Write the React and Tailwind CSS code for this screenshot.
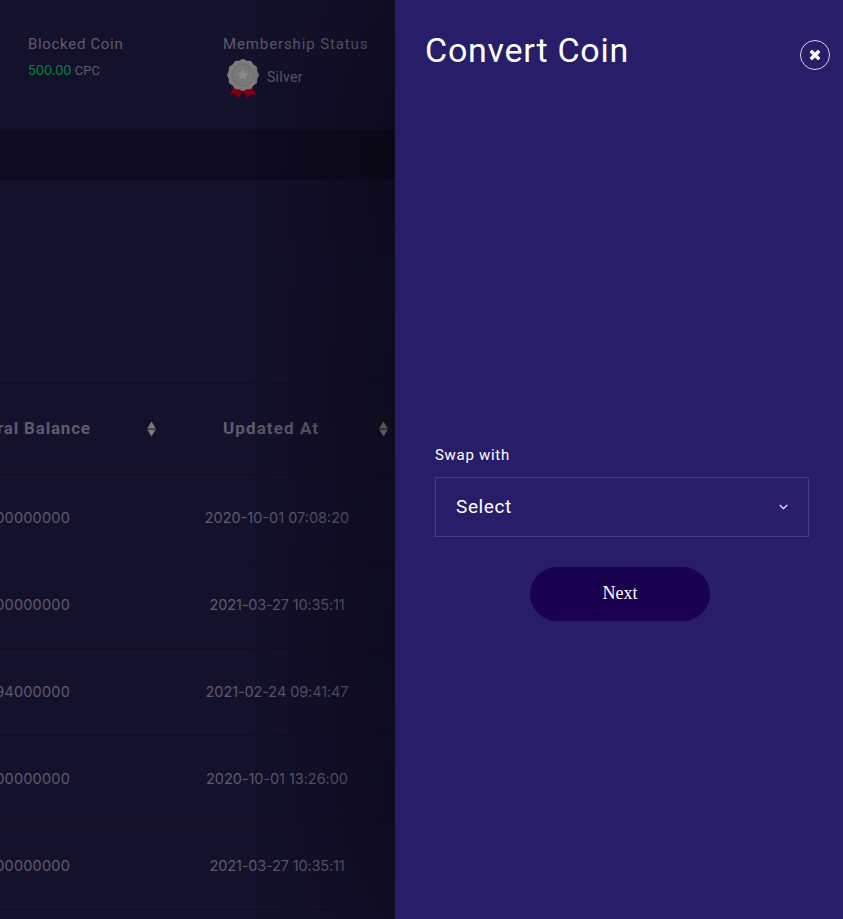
import React from "react";

const rows = [
  { balance: "0.00000000", date: "2020-10-01 07:08:20", cls: "tracking-[0px]" },
  { balance: "0.00000000", date: "2021-03-27 10:35:11", cls: "tracking-[-0.15px]" },
  { balance: "0.94000000", date: "2021-02-24 09:41:47", cls: "tracking-[-0.1px]" },
  { balance: "0.00000000", date: "2020-10-01 13:26:00", cls: "tracking-[-0.05px]" },
  { balance: "0.00000000", date: "2021-03-27 10:35:11", cls: "tracking-[-0.15px]" },
];

function SortIcon() {
  return (
    <svg width="9" height="16" viewBox="0 0 9 16" className="shrink-0" fill="#7c7a77">
      <path d="M4.5 0.5 L8.8 7.5 H0.2 Z" />
      <path d="M4.5 15.5 L8.8 8.5 H0.2 Z" />
    </svg>
  );
}

function Medal() {
  const points = Array.from({ length: 72 }, (_, i) => {
    const a = (i / 72) * Math.PI * 2;
    const r = 15.4 + 0.6 * Math.cos(a * 12);
    return `${16 + r * Math.sin(a)},${16 - r * Math.cos(a)}`;
  }).join(" ");
  return (
    <svg width="32" height="40" viewBox="0 0 32 40" className="shrink-0">
      <path d="M7 27 L3 35.8 L9 35.5 L11.5 40 L16 31 Z" fill="#80000f" />
      <path d="M25 27 L29 35.8 L23 35.5 L20.500 40 L16 31 Z" fill="#80000f" />
      <polygon points={points} fill="#7c7c7c" />
      <circle cx="16" cy="16" r="11" fill="#787878" stroke="#6e6e6e" strokeWidth="1" />
      <path d="M16 9.800 L17.700 13.700 L21.800 14.100 L18.700 16.900 L19.600 21 L16 18.900 L12.400 21 L13.300 16.900 L10.200 14.100 L14.300 13.700 Z" fill="#8a8a8a" />
    </svg>
  );
}

export default function App() {
  return (
    <div className="flex h-[919px] w-[843px] overflow-hidden bg-[#14112c] font-['Inter','Roboto',sans-serif]">
      <main className="flex w-[395px] shrink-0 flex-col text-[#5e5b6e]">
        <header className="flex h-[130px] shrink-0 pt-[34px] pl-[28px] font-['Roboto',sans-serif]">
          <div className="w-[195px] shrink-0">
            <div className="text-[15px] leading-5 tracking-[0.68px]">Blocked Coin</div>
            <div className="mt-1.5 text-[13px] leading-5 whitespace-nowrap">
              <span className="font-['Inter',sans-serif] text-[13px] tracking-[-0.05px] text-[#008a3e]">500.00</span> CPC
            </div>
          </div>
          <div>
            <div className="text-[15px] leading-5 tracking-[0.88px] whitespace-nowrap">Membership Status</div>
            <div className="mt-[5px] flex gap-2 pl-1">
              <Medal />
              <span className="pt-2 text-[14px] leading-5 tracking-[0.3px]">Silver</span>
            </div>
          </div>
        </header>
        <div className="h-[50px] shrink-0 bg-[#0f0b20]" />
        <section className="pt-[203px]">
          <div className="flex h-[92px] items-center border-y border-[#100d22] font-['Roboto',sans-serif] text-[17px] font-bold tracking-[0.8px] whitespace-nowrap">
            <div className="flex w-[90px] shrink-0 justify-end overflow-hidden">
              <span className="mr-[-0.8px]">Referral Balance</span>
            </div>
            <div className="ml-[57px] flex"><SortIcon /></div>
            <div className="ml-[67px] w-[156px] tracking-[1.1px]">Updated At</div>
            <div className="flex"><SortIcon /></div>
          </div>
          {rows.map((row, i) => (
            <div key={i} className="flex h-[87px] items-center border-b border-[#100d22] text-[14.5px] whitespace-nowrap">
              <div className="flex w-[70px] shrink-0 justify-end overflow-hidden tracking-[0.2px]">{row.balance}</div>
              <div className={"ml-[107px] w-[200px] text-center " + row.cls}>{row.date}</div>
            </div>
          ))}
        </section>
      </main>

      <aside className="relative z-10 flex w-[448px] shrink-0 flex-col bg-[#281d68] text-white shadow-[0_0_200px_rgba(0,0,0,0.75)]">
        <div className="flex items-start justify-between pt-[28px] pr-[13px] pl-[30px] font-['Roboto',sans-serif]">
          <h1 className="pb-px text-[34px] leading-[45px] font-normal tracking-[0.75px]">Convert Coin</h1>
          <button className="mt-3 flex size-[30px] items-center justify-center rounded-full border border-white/80">
            <svg width="10" height="10" viewBox="0 0 10 10" stroke="white" strokeWidth="3.400">
              <path d="M0.800 0.800 L9.200 9.200 M9.200 0.800 L0.800 9.200" />
            </svg>
          </button>
        </div>
        <form className="mt-[371px] flex flex-col px-10 pr-[34px] font-['Roboto',sans-serif]">
          <label className="text-[15px] leading-5 tracking-[0.7px]">Swap with</label>
          <div className="mt-3 flex h-[60px] items-center justify-between border border-[#443b80] pr-5 pl-5">
            <span className="text-[19px] tracking-[0.6px]">Select</span>
            <svg width="9" height="6" viewBox="0 0 9 6" fill="none" stroke="white" strokeWidth="1.200">
              <path d="M0.700 0.800 L4.500 4.600 L8.300 0.800" />
            </svg>
          </div>
          <button type="button" className="mt-[30px] ml-[95px] h-[54px] w-[180px] rounded-full bg-[#1b0250] pb-0.5 font-['Liberation_Serif',serif] text-[18px]">
            Next
          </button>
        </form>
      </aside>
    </div>
  );
}
